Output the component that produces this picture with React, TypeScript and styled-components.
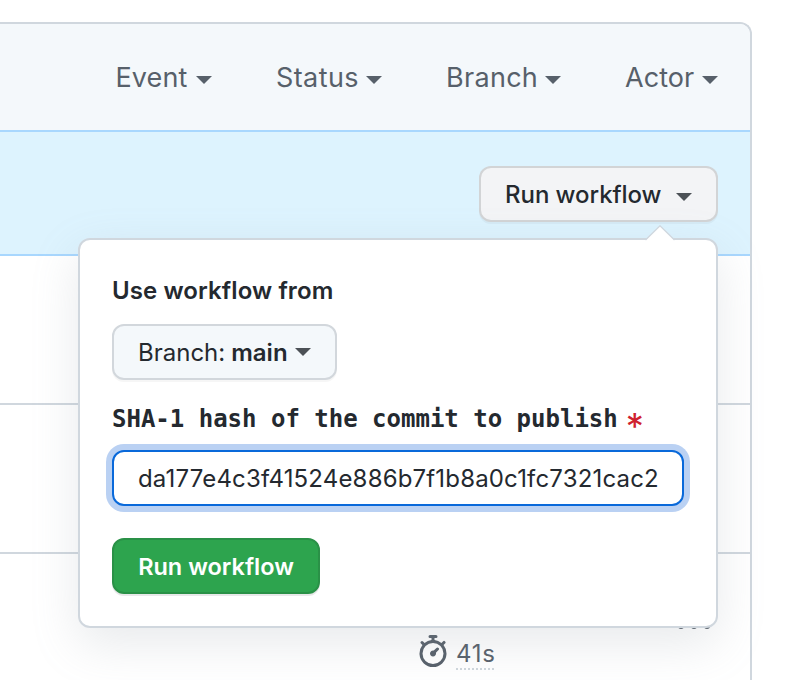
import React from 'react';
import styled, { createGlobalStyle } from 'styled-components';

const GlobalStyle = createGlobalStyle`
  *, *::before, *::after { box-sizing: border-box; }
  body {
    margin: 0;
    background: #ffffff;
    color: #24292f;
    font-family: Inter, "Liberation Sans", sans-serif;
    overflow: hidden;
  }
`;

const Page = styled.main`
  width: 804px;
  height: 680px;
  padding-top: 22px;
  overflow: hidden;
`;

const RunsBox = styled.section`
  width: 752px;
  height: 700px;
  border: 2px solid #d0d7de;
  border-left: 0;
  border-bottom: 0;
  border-top-right-radius: 12px;
`;

const FilterBar = styled.header`
  display: flex;
  justify-content: flex-end;
  align-items: center;
  gap: 64px;
  height: 106px;
  padding-right: 32px;
  background: #f4f8fb;
  border-top-right-radius: 10px;
`;

const FilterButton = styled.button<{ $width: number; $tracking: number }>`
  display: flex;
  align-items: center;
  justify-content: space-between;
  width: ${(p) => p.$width}px;
  padding: 2px 0 0;
  border: 0;
  background: none;
  color: #57606a;
  font: 400 27px/42px Inter, "Liberation Sans", sans-serif;
  letter-spacing: ${(p) => p.$tracking}px;
  white-space: nowrap;
`;

const Caret = styled.span<{ $color: string; $drop?: number; $gap?: number }>`
  width: 0;
  height: 0;
  flex: none;
  margin-top: ${(p) => p.$drop ?? 0}px;
  margin-left: ${(p) => p.$gap ?? 0}px;
  border: 8px solid transparent;
  border-top-color: ${(p) => p.$color};
  border-bottom: 0;
`;

const DispatchRow = styled.div`
  display: flex;
  justify-content: flex-end;
  height: 126px;
  padding: 34px 32px 0 0;
  border-top: 2px solid #a8d7fe;
  border-bottom: 2px solid #a8d7fe;
  background: #ddf3fe;
`;

const MenuAnchor = styled.div`
  position: relative;
  width: 239px;
  height: 56px;
`;

const DispatchButton = styled.button`
  display: flex;
  align-items: center;
  width: 100%;
  height: 56px;
  padding: 2px 24px 0;
  border: 2px solid rgba(27, 31, 36, 0.15);
  border-radius: 12px;
  background: #f3f4f6;
  box-shadow: 0 2px 0 rgba(27, 31, 36, 0.04);
  color: #24292f;
  font: 500 24px/36px Inter, "Liberation Sans", sans-serif;
  letter-spacing: -0.05px;
  white-space: nowrap;
`;

const Popover = styled.form`
  position: absolute;
  z-index: 2;
  top: 72px;
  right: 0;
  width: 640px;
  height: 390px;
  padding: 33px 32px 32px;
  border: 2px solid #d0d7de;
  border-radius: 12px;
  background: #ffffff;
  box-shadow: 0 16px 48px rgba(140, 149, 159, 0.2);
`;

const Pointer = styled.svg`
  position: absolute;
  top: -15px;
  right: 41px;
  width: 30px;
  height: 17px;
`;

const Heading = styled.p`
  margin: 0 0 15px;
  font-weight: 600;
  font-size: 24px;
  line-height: 36px;
  letter-spacing: 0.1px;
`;

const BranchSelect = styled.button`
  display: flex;
  align-items: center;
  width: 225px;
  height: 56px;
  padding: 2px 24px 0;
  border: 2px solid #d2d7dc;
  border-radius: 12px;
  background: #f4f8fb;
  box-shadow: 0 2px 0 rgba(27, 31, 36, 0.04);
  color: #24292f;
  font: 400 24px/36px Inter, "Liberation Sans", sans-serif;
  white-space: nowrap;
`;

const BranchName = styled.strong`
  margin-left: 6px;
  font-weight: 600;
`;

const FieldLabel = styled.label`
  display: flex;
  height: 36px;
  margin: 21px 0 13px;
  font: 700 24px/36px "DejaVu Sans Mono", monospace;
  white-space: nowrap;
`;

const Required = styled.span`
  margin: 4px 0 0 8px;
  color: #cf222e;
  font: 400 36px/42px Inter, sans-serif;
`;

const HashInput = styled.input`
  display: block;
  width: 572px;
  height: 56px;
  padding: 0 24px;
  border: 2px solid #0969da;
  border-radius: 12px;
  outline: 0;
  background: #ffffff;
  box-shadow: 0 0 0 6px #bad1f3;
  color: #24292f;
  font: 400 24px/36px Inter, "Liberation Sans", sans-serif;
  letter-spacing: 0.166px;
`;

const SubmitButton = styled.button`
  width: 208px;
  height: 56px;
  margin-top: 32px;
  padding: 2px 0 0;
  border: 2px solid #2a9147;
  border-radius: 12px;
  background: #2da44e;
  box-shadow: 0 2px 0 rgba(27, 31, 36, 0.1);
  color: #ffffff;
  font: 600 23.5px/36px Inter, "Liberation Sans", sans-serif;
  letter-spacing: 0;
  white-space: nowrap;
`;

const RunRow = styled.div`
  display: flex;
  justify-content: flex-end;
  height: 149px;
  border-bottom: 2px solid #d0d7de;
`;

const RunMeta = styled.div`
  display: flex;
  align-items: flex-start;
  width: 261px;
  padding-top: 81px;
  color: #57606a;
`;

const Duration = styled.span`
  height: 33px;
  margin: 2px 0 0 7px;
  font-size: 24px;
  line-height: 34px;
  letter-spacing: 0.7px;
  background: repeating-linear-gradient(90deg, #d0d7de 0 2px, transparent 2px 4px) 0 100% / 100% 2px no-repeat;
`;

const RowMenu = styled.div`
  width: 72px;
  padding-top: 56px;
  color: #57606a;
`;

const filters = [
  { label: 'Event', width: 96.5, tracking: 0.1 },
  { label: 'Status', width: 106, tracking: 0.4 },
  { label: 'Branch', width: 115, tracking: 0.3 },
  { label: 'Actor', width: 93, tracking: 0.05 },
];

function StopwatchIcon() {
  return (
    <svg width="32" height="32" viewBox="0 0 16 16" fill="currentColor" aria-hidden="true">
      <path
        fillRule="evenodd"
        d="M5.75.75A.75.75 0 016.5 0h3a.75.75 0 010 1.5h-.75v1l-.001.041a6.718 6.718 0 013.464 1.435l.007-.006.75-.75a.75.75 0 111.06 1.06l-.75.75-.006.007a6.75 6.75 0 11-10.548 0L2.72 5.03l-.75-.75a.75.75 0 011.06-1.06l.75.75.007.006A6.718 6.718 0 017.25 2.541a.756.756 0 010-.041v-1H6.5a.75.75 0 01-.75-.75zM8 14.5A5.25 5.25 0 108 4a5.25 5.25 0 000 10.5zm.389-6.7l1.33-1.33a.75.75 0 111.061 1.06L9.45 8.861A1.502 1.502 0 018 10.75a1.5 1.5 0 11.389-2.95z"
      />
    </svg>
  );
}

function KebabIcon() {
  return (
    <svg width="32" height="32" viewBox="0 0 16 16" fill="currentColor" aria-hidden="true">
      <circle cx="1.5" cy="8" r="1.5" />
      <circle cx="8" cy="8" r="1.5" />
      <circle cx="14.5" cy="8" r="1.5" />
    </svg>
  );
}

export default function App() {
  return (
    <>
      <GlobalStyle />
      <Page>
        <RunsBox>
          <FilterBar>
            {filters.map((f) => (
              <FilterButton key={f.label} type="button" $width={f.width} $tracking={f.tracking}>
                {f.label}
                <Caret $color="#57606a" $drop={4} />
              </FilterButton>
            ))}
          </FilterBar>
          <DispatchRow>
            <MenuAnchor>
              <DispatchButton type="button">
                Run workflow
                <Caret $color="#4c5156" $drop={3} $gap={15} />
              </DispatchButton>
              <Popover onSubmit={(e) => e.preventDefault()}>
                <Pointer viewBox="0 0 30 17" aria-hidden="true">
                  <path d="M0.5 15.5 L15 1 L29.5 15.5 V17 H0.5 Z" fill="#ffffff" />
                  <path d="M0.5 15 L15 0.8 L29.5 15" fill="none" stroke="#d0d7de" strokeWidth="1.3" />
                </Pointer>
                <Heading>Use workflow from</Heading>
                <BranchSelect type="button">
                  Branch: <BranchName>main</BranchName>
                  <Caret $color="#4c5156" $drop={-2} $gap={7} />
                </BranchSelect>
                <FieldLabel htmlFor="sha">
                  SHA-1 hash of the commit to publish
                  <Required>*</Required>
                </FieldLabel>
                <HashInput id="sha" defaultValue="da177e4c3f41524e886b7f1b8a0c1fc7321cac2" spellCheck={false} />
                <SubmitButton type="submit">Run workflow</SubmitButton>
              </Popover>
            </MenuAnchor>
          </DispatchRow>
          <RunRow />
          <RunRow />
          <RunRow>
            <RunMeta>
              <StopwatchIcon />
              <Duration>41s</Duration>
            </RunMeta>
            <RowMenu>
              <KebabIcon />
            </RowMenu>
          </RunRow>
        </RunsBox>
      </Page>
    </>
  );
}
